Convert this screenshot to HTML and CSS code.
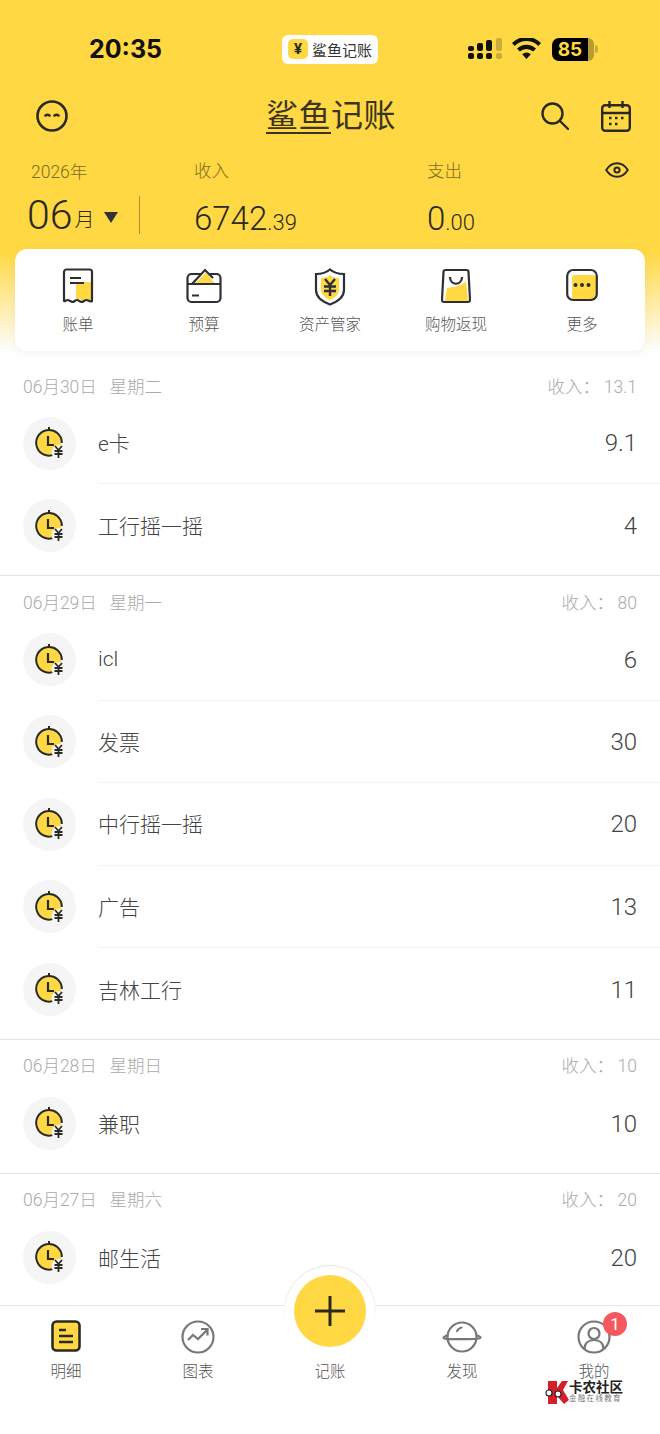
FILE: index.html
```html
<!DOCTYPE html>
<html lang="zh-CN">
<head>
    <meta charset="UTF-8">
    <meta name="viewport" content="width=device-width, initial-scale=1.0">
    <title>鲨鱼记账</title>
    <link rel="stylesheet" href="styles.css">
</head>
<body>
    <!-- shared icon for every bill row -->
    <svg class="defs" width="0" height="0">
        <symbol id="clock" viewBox="0 0 32 32">
            <path d="M15 0v4" fill="none" stroke="#2b2a22" stroke-width="2"/>
            <circle cx="15" cy="16" r="12" fill="#ffd843"/>
            <path d="M22 26.500A12.800 12.800 0 1 1 27.800 16" fill="none" stroke="#2b2a22" stroke-width="2"/>
            <path d="M14 9v9h6" fill="none" stroke="#2b2a22" stroke-width="2.200"/>
            <circle cx="24.500" cy="25" r="7" fill="#f5f5f5"/>
            <path d="M21 19l3.500 4 3.500-4M20.500 24h8M20.500 27h8M24.500 23v8" fill="none" stroke="#2b2a22" stroke-width="1.800"/>
        </symbol>
    </svg>

    <header class="hero">
        <div class="status">
            <span class="time">20:35</span>
            <div class="app-pill">
                <span class="app-pill-icon">¥</span>
                <span class="app-pill-name">鲨鱼记账</span>
            </div>
            <div class="status-icons">
                <svg width="34" height="22" viewBox="0 0 34 22">
                    <g fill="#111">
                        <rect x="0" y="8" width="6" height="5" rx="2"/>
                        <rect x="9" y="5" width="6" height="8" rx="2"/>
                        <rect x="18" y="2" width="6" height="11" rx="2"/>
                        <rect x="0" y="15" width="6" height="6" rx="2"/>
                        <rect x="9" y="15" width="6" height="6" rx="2"/>
                        <rect x="18" y="15" width="6" height="6" rx="2"/>
                    </g>
                    <g fill="#c9ad3a">
                        <rect x="28" y="0" width="6" height="13" rx="2"/>
                        <rect x="28" y="15" width="6" height="6" rx="2"/>
                    </g>
                </svg>
                <svg class="wifi" width="29" height="22" viewBox="0 0 29 22">
                    <path d="M14.500 21l-4.300-4.800a6 6 0 0 1 8.600 0zM7.800 13.600l-2.800-3a13.500 13.500 0 0 1 19 0l-2.800 3a9.600 9.600 0 0 0-13.400 0zM2.700 8L0 5a20.500 20.500 0 0 1 29 0l-2.700 3A16.600 16.600 0 0 0 2.700 8z" fill="#111"/>
                </svg>
                <div class="battery"><span class="battery-level">85</span><span class="battery-rest"></span><span class="battery-nub"></span></div>
            </div>
        </div>

        <div class="nav">
            <svg width="32" height="32" viewBox="0 0 32 32" fill="none" stroke="#2b2a22" stroke-width="2.600">
                <circle cx="16" cy="16" r="14.500"/>
                <path d="M9.500 15.500q2-1.500 4 0M18.500 15.500q2-1.500 4 0" stroke-linecap="round"/>
            </svg>
            <h1 class="brand"><span class="brand-line">鲨鱼</span>记账</h1>
            <div class="nav-tools">
                <svg width="28" height="28" viewBox="0 0 28 28" fill="none" stroke="#2b2a22" stroke-width="2.400">
                    <circle cx="11.500" cy="11.500" r="10"/>
                    <path d="M19 19l8 8" stroke-linecap="round"/>
                </svg>
                <svg width="30" height="31" viewBox="0 0 30 31" fill="none" stroke="#2b2a22" stroke-width="2.400">
                    <rect x="1.200" y="4.200" width="27.600" height="25.600" rx="3"/>
                    <path d="M1.200 12h27.600M8.500 0v7M21.500 0v7"/>
                    <path d="M8 17h2.500M14 17h2.500M20 17h2.500M8 23h2.500M14 23h2.500" stroke-width="2.600"/>
                </svg>
            </div>
        </div>

        <div class="summary">
            <div class="period">
                <div class="label period-year">2026年</div>
                <div class="period-month">
                    <span class="month-num">06</span><span class="month-unit">月</span>
                    <span class="caret"></span>
                </div>
            </div>
            <div class="money">
                <div class="label">收入</div>
                <div class="money-val">6742<small>.39</small></div>
            </div>
            <div class="money">
                <div class="label">支出</div>
                <div class="money-val">0<small>.00</small></div>
            </div>
            <svg class="eye" width="24" height="16" viewBox="0 0 24 16" fill="none" stroke="#2b2a22" stroke-width="2">
                <path d="M1.200 8C4 3.500 7.800 1.200 12 1.200S20 3.500 22.800 8C20 12.500 16.200 14.800 12 14.800S4 12.500 1.200 8z"/>
                <circle cx="12" cy="8" r="2.600"/>
            </svg>
        </div>

        <nav class="shortcuts">
            <a class="shortcut">
                <svg width="32" height="36" viewBox="0 0 32 36">
                    <path d="M14 14h16v17l-3 2-3-2-3 2-3-2-4 1z" fill="#ffd843"/>
                    <path d="M2 33V4a2.500 2.500 0 0 1 2.500-2.500h23A2.500 2.500 0 0 1 30 4v29c-2.300 1.600-3.500-1-5.500-1s-3 2-5 2-2.700-2-4.500-2-2.700 2-4.500 2-3-2-5-2-2.200 2-3.500 1z" fill="none" stroke="#2e2e36" stroke-width="2.200"/>
                    <path d="M8 10h11M8 15h14" stroke="#2e2e36" stroke-width="2"/>
                </svg>
                <span>账单</span>
            </a>
            <a class="shortcut">
                <svg width="36" height="36" viewBox="0 0 36 36">
                    <rect x="1.500" y="6" width="33" height="28" rx="4" fill="#fff" stroke="#2e2e36" stroke-width="2.200"/>
                    <path d="M5 16L19 1.500 30 12v4z" fill="#fff"/>
                    <path d="M9 15.500L20 4.500l9 11z" fill="#ffd843"/>
                    <path d="M6 16L19 2l8 8" fill="none" stroke="#2e2e36" stroke-width="2.200"/>
                    <path d="M1.500 16h33M6 27.500h7" stroke="#2e2e36" stroke-width="2.200"/>
                </svg>
                <span>预算</span>
            </a>
            <a class="shortcut">
                <svg width="32" height="38" viewBox="0 0 32 38">
                    <path d="M7 10c4 0 7-1 9-3 2 2 5 3 9 3v12c0 4-4 8-9 10-5-2-9-6-9-10z" fill="#ffd843"/>
                    <path d="M16 1.500c3.500 3 8 4.500 14 4.500v16c0 6.500-6 11.500-14 14.500C8 33.500 2 28.500 2 22V6c6 0 10.500-1.500 14-4.500z" fill="none" stroke="#2e2e36" stroke-width="2.200"/>
                    <path d="M11 11l5 6 5-6M10 18.500h12M10 23h12M16 17v11" fill="none" stroke="#2e2e36" stroke-width="2.400"/>
                </svg>
                <span>资产管家</span>
            </a>
            <a class="shortcut">
                <svg width="30" height="36" viewBox="0 0 30 36">
                    <path d="M6 20C14 19 24 16 25 13l2 20H4z" fill="#ffd843"/>
                    <path d="M4.500 2h21a2 2 0 0 1 2 2l1.500 28a2 2 0 0 1-2 2H3a2 2 0 0 1-2-2L2.500 4a2 2 0 0 1 2-2z" fill="none" stroke="#2e2e36" stroke-width="2.200"/>
                    <path d="M9 9c0 9 12 9 12 0" fill="none" stroke="#2e2e36" stroke-width="2.200"/>
                </svg>
                <span>购物返现</span>
            </a>
            <a class="shortcut">
                <svg width="32" height="34" viewBox="0 0 32 34">
                    <rect x="6" y="7" width="24" height="25" rx="3" fill="#ffd843"/>
                    <rect x="1.200" y="2" width="29.600" height="30" rx="6" fill="none" stroke="#2e2e36" stroke-width="2.200"/>
                    <circle cx="9.500" cy="17" r="2" fill="#2e2e36"/>
                    <circle cx="16" cy="17" r="2" fill="#2e2e36"/>
                    <circle cx="22.500" cy="17" r="2" fill="#2e2e36"/>
                </svg>
                <span>更多</span>
            </a>
        </nav>
    </header>

    <main class="list">
        <section class="day">
            <div class="day-head"><span>06月30日&nbsp;&nbsp;&nbsp;星期二</span><span>收入：&#8201;13.1</span></div>
            <div class="row"><span class="avatar"><svg><use href="#clock"/></svg></span><div class="row-body"><span class="name">e卡</span><span class="amount">9.1</span></div></div>
            <div class="row"><span class="avatar"><svg><use href="#clock"/></svg></span><div class="row-body"><span class="name">工行摇一摇</span><span class="amount">4</span></div></div>
        </section>
        <section class="day">
            <div class="day-head"><span>06月29日&nbsp;&nbsp;&nbsp;星期一</span><span>收入：&#8201;80</span></div>
            <div class="row"><span class="avatar"><svg><use href="#clock"/></svg></span><div class="row-body"><span class="name">icl</span><span class="amount">6</span></div></div>
            <div class="row"><span class="avatar"><svg><use href="#clock"/></svg></span><div class="row-body"><span class="name">发票</span><span class="amount">30</span></div></div>
            <div class="row"><span class="avatar"><svg><use href="#clock"/></svg></span><div class="row-body"><span class="name">中行摇一摇</span><span class="amount">20</span></div></div>
            <div class="row"><span class="avatar"><svg><use href="#clock"/></svg></span><div class="row-body"><span class="name">广告</span><span class="amount">13</span></div></div>
            <div class="row"><span class="avatar"><svg><use href="#clock"/></svg></span><div class="row-body"><span class="name">吉林工行</span><span class="amount">11</span></div></div>
        </section>
        <section class="day">
            <div class="day-head"><span>06月28日&nbsp;&nbsp;&nbsp;星期日</span><span>收入：&#8201;10</span></div>
            <div class="row"><span class="avatar"><svg><use href="#clock"/></svg></span><div class="row-body"><span class="name">兼职</span><span class="amount">10</span></div></div>
        </section>
        <section class="day">
            <div class="day-head"><span>06月27日&nbsp;&nbsp;&nbsp;星期六</span><span>收入：&#8201;20</span></div>
            <div class="row"><span class="avatar"><svg><use href="#clock"/></svg></span><div class="row-body"><span class="name">邮生活</span><span class="amount">20</span></div></div>
        </section>
    </main>

    <footer class="tabbar">
        <div class="add-btn"><span class="add-circle"><svg width="32" height="32" viewBox="0 0 32 32"><path d="M16 1v30M1 16h30" stroke="#2b2a22" stroke-width="3"/></svg></span></div>
        <a class="tab">
            <svg width="30" height="32" viewBox="0 0 30 32">
                <rect x="1.500" y="1.500" width="27" height="29" rx="4" fill="#ffd843" stroke="#2b2a22" stroke-width="2.600"/>
                <path d="M8 10h7M8 16h14M8 22h14" stroke="#2b2a22" stroke-width="2.400"/>
            </svg>
            <span>明细</span>
        </a>
        <a class="tab">
            <svg width="34" height="34" viewBox="0 0 34 34" fill="none" stroke="#777" stroke-width="2.200">
                <circle cx="17" cy="17" r="15.500"/>
                <path d="M7 20l5-5 5 4 9-9M20 9h6.500v6.500"/>
            </svg>
            <span>图表</span>
        </a>
        <a class="tab tab-add-label">
            <span>记账</span>
        </a>
        <a class="tab">
            <svg width="40" height="34" viewBox="0 0 40 34" fill="none" stroke="#777" stroke-width="2.200">
                <circle cx="20" cy="17" r="14.500"/>
                <path d="M15 11c1-2 2.500-3 4.500-3.500" stroke-linecap="round"/>
                <path d="M5.500 15.500C3 16 1.500 17 1.500 18c0 .8 3 1.200 18.500 1.200S38.500 18.500 38.500 17.500c0-.8-1.500-1.500-4-2"/>
            </svg>
            <span>发现</span>
        </a>
        <a class="tab">
            <svg width="34" height="34" viewBox="0 0 34 34" fill="none" stroke="#777" stroke-width="2.200">
                <circle cx="17" cy="17" r="15.500"/>
                <circle cx="17" cy="13.500" r="5.500"/>
                <path d="M7.500 29c0-6 4-9 9.500-9s9.500 3 9.500 9"/>
            </svg>
            <span>我的</span>
            <b class="badge">1</b>
        </a>
        <div class="mark">
            <svg width="24" height="23" viewBox="0 0 24 23">
                <path d="M3 0h9v7l5-7h6l-5 9 6 10-5 4-7-8v8H3z" fill="#d3202a"/>
                <circle cx="4" cy="12" r="3" fill="#fff" stroke="#222" stroke-width="1.100"/>
                <circle cx="13" cy="13" r="3" fill="#fff" stroke="#222" stroke-width="1.100"/>
            </svg>
            <div class="mark-text"><b>卡农社区</b><small>金融在线教育</small></div>
        </div>
    </footer>
</body>
</html>
```

FILE: styles.css
```css
/* 鲨鱼记账 home page */
* {
    box-sizing: border-box;
}
html, body {
    margin: 0;
    padding: 0;
}
body {
    width: 660px;
    height: 1434px;
    overflow: hidden;
    display: flex;
    flex-direction: column;
    background-color: #fff;
    font-family: Roboto, "Noto Sans CJK SC", sans-serif;
    font-weight: 300;
    color: #444;
}
.defs {
    position: absolute;
}

/* yellow top area */
.hero {
    flex: none;
    height: 360px;
    padding-bottom: 9px;
    background: linear-gradient(#ffd843 0, #ffd843 252px, #fdfdfb 350px, #fff 360px);
    display: flex;
    flex-direction: column;
    color: #2b2a22;
}
.status {
    height: 98px;
    padding-left: 89px;
    display: flex;
    align-items: center;
}
.time {
    width: 73px;
    font-family: Inter, sans-serif;
    font-size: 25px;
    font-weight: 700;
    color: #111;
    white-space: nowrap;
}
.app-pill {
    margin-left: 120px;
    width: 96px;
    height: 29px;
    padding-left: 6px;
    border-radius: 6px;
    background-color: #fff;
    display: flex;
    align-items: center;
    gap: 4px;
}
.app-pill-icon {
    width: 20px;
    height: 20px;
    border-radius: 5px;
    background-color: #ffd843;
    font-size: 15px;
    font-weight: 700;
    line-height: 20px;
    text-align: center;
    color: #2b2a22;
}
.app-pill-name {
    font-size: 15px;
    font-weight: 400;
    color: #333;
    white-space: nowrap;
}
.status-icons {
    margin-left: 90px;
    display: flex;
    align-items: center;
}
.wifi {
    margin-left: 10px;
}
.battery {
    margin-left: 11px;
    display: flex;
    align-items: center;
}
.battery-level {
    width: 36px;
    height: 23px;
    border-radius: 7px 0 0 7px;
    background-color: #000;
    color: #ffd843;
    font-family: Inter, sans-serif;
    font-size: 19px;
    font-weight: 700;
    line-height: 23px;
    text-align: center;
}
.battery-rest {
    width: 6px;
    height: 23px;
    border-radius: 0 7px 7px 0;
    background-color: #b79c35;
}
.battery-nub {
    width: 3px;
    height: 8px;
    margin-left: 1px;
    border-radius: 0 3px 3px 0;
    background-color: #c9ad3a;
}

.nav {
    height: 36px;
    padding: 0 29px 0 36px;
    display: grid;
    grid-template-columns: 1fr auto 1fr;
    align-items: center;
}
.brand {
    margin: 0 5px 0 0;
    font-size: 32px;
    font-weight: 400;
    letter-spacing: 0.5px;
    color: #3a3420;
    line-height: 36px;
}
.brand-line {
    display: inline-block;
    border-bottom: 2px solid #3a3420;
    line-height: 32px;
}
.nav-tools {
    display: flex;
    justify-content: flex-end;
    align-items: center;
    gap: 32px;
}

.summary {
    height: 115px;
    padding: 26px 0 0 27px;
    display: flex;
    align-items: flex-start;
}
.label {
    font-size: 17.500px;
    line-height: 22px;
    color: #7e6d22;
}
.period {
    width: 167px;
}
.period-year {
    margin-left: 4px;
    padding-top: 1px;
}
.period-month {
    height: 38px;
    margin-top: 13px;
    display: flex;
    align-items: flex-end;
    position: relative;
}
.month-num {
    font-size: 41px;
    line-height: 37px;
}
.month-unit {
    margin-left: 2px;
    font-size: 20px;
    line-height: 28px;
}
.caret {
    margin: 0 0 11px 10px;
    border-style: solid;
    border-width: 11px 7.500px 0;
    border-color: #333 transparent transparent;
}
.period-month::after {
    content: "";
    position: absolute;
    left: 112px;
    top: 0;
    width: 1px;
    height: 38px;
    background-color: #a9922f;
}
.money {
    width: 233px;
}
.money-val {
    margin-top: 18px;
    font-size: 33px;
    line-height: 38px;
}
.money-val small {
    font-size: 22px;
}
.eye {
    margin: 2px 0 0 -55px;
}

/* white card with the five shortcuts */
.shortcuts {
    margin: 0 15px;
    height: 102px;
    border-radius: 12px;
    background-color: #fff;
    box-shadow: 0 2px 10px rgba(0, 0, 0, 0.04);
    display: grid;
    grid-template-columns: repeat(5, 1fr);
}
.shortcut {
    padding-top: 19px;
    display: flex;
    flex-direction: column;
    align-items: center;
    justify-content: space-between;
    height: 86px;
    font-size: 15.500px;
    line-height: 20px;
    color: #555;
}

/* bill list */
.list {
    flex: 1;
    overflow: hidden;
}
.day {
    padding-bottom: 8.600px;
    border-bottom: 1px solid #e4e4e4;
}
.day:last-child {
    border-bottom: 0;
}
.day-head {
    height: 42px;
    padding: 8px 23px 0;
    display: flex;
    justify-content: space-between;
    align-items: center;
    font-size: 17.500px;
    color: #aaa;
}
.row {
    height: 82.400px;
    padding-left: 23px;
    display: flex;
    align-items: center;
}
.avatar {
    flex: none;
    width: 53px;
    height: 53px;
    border-radius: 50%;
    background-color: #f5f5f5;
    display: flex;
    align-items: center;
    justify-content: center;
}
.avatar svg {
    width: 32px;
    height: 32px;
}
.row-body {
    flex: 1;
    height: 100%;
    margin-left: 22px;
    padding-right: 23px;
    border-bottom: 1px solid #f3f3f3;
    display: flex;
    justify-content: space-between;
    align-items: center;
    font-size: 21px;
    color: #444;
}
.row:last-child .row-body {
    border-bottom: 0;
}
.name {
    margin-bottom: 1px;
}
.amount {
    margin-top: 1px;
    font-size: 24px;
    color: #444;
}

/* bottom tabs */
.tabbar {
    flex: none;
    height: 129px;
    border-top: 1px solid #e6e6e6;
    background-color: #fff;
    display: grid;
    grid-template-columns: repeat(5, 132px);
    position: relative;
}
.tab {
    height: 76px;
    padding-top: 14px;
    display: flex;
    flex-direction: column;
    align-items: center;
    justify-content: space-between;
    position: relative;
    font-size: 15.500px;
    line-height: 20px;
    color: #555;
}
.tab-add-label {
    justify-content: flex-end;
}
.add-btn {
    position: absolute;
    left: 284px;
    top: -41px;
    width: 92px;
    height: 92px;
    border-radius: 50%;
    background: linear-gradient(#e8e8e8 0, #f0f0f0 35%, #fff 62%);
    display: flex;
    align-items: center;
    justify-content: center;
    z-index: 1;
}
.add-circle {
    width: 72px;
    height: 72px;
    border-radius: 50%;
    background-color: #ffd843;
    box-shadow: 0 0 0 9px #fff;
    display: flex;
    align-items: center;
    justify-content: center;
}
.badge {
    position: absolute;
    left: 75px;
    top: 6px;
    width: 24px;
    height: 24px;
    border-radius: 50%;
    background-color: #f5585e;
    color: #fff;
    font-size: 17px;
    font-weight: 400;
    line-height: 24px;
    text-align: center;
}
.mark {
    position: absolute;
    left: 545px;
    top: 74px;
    display: flex;
    align-items: center;
}
.mark-text {
    display: flex;
    flex-direction: column;
}
.mark-text b {
    font-size: 13.500px;
    font-weight: 700;
    line-height: 14px;
    color: #222;
}
.mark-text small {
    font-size: 7.500px;
    letter-spacing: 1.300px;
    line-height: 10px;
    font-weight: 400;
    color: #777;
    white-space: nowrap;
}
```
